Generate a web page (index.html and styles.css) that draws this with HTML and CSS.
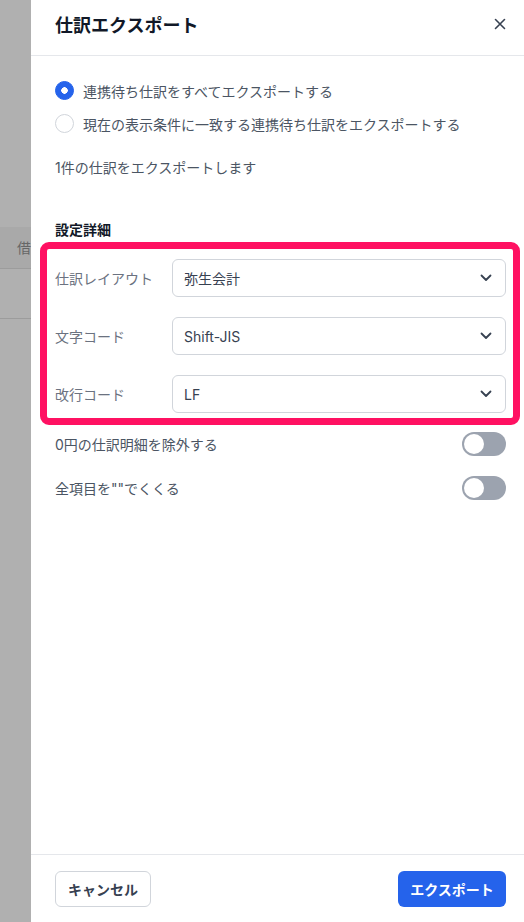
FILE: index.html
```html
<!DOCTYPE html>
<html lang="ja">
<head>
    <meta charset="UTF-8">
    <meta name="viewport" content="width=device-width, initial-scale=1.0">
    <title>仕訳エクスポート</title>
    <link rel="stylesheet" href="styles.css">
</head>
<body>
    <div class="screen">
        <div class="behind">
            <div class="behind-head">借方</div>
            <div class="behind-row"></div>
        </div>

        <div class="drawer">
            <div class="drawer-header">
                <h2>仕訳エクスポート</h2>
                <button class="close-button" aria-label="閉じる">
                    <svg width="12" height="12" viewBox="0 0 12 12">
                        <path d="M1.5 1.5 L10.5 10.5 M10.5 1.5 L1.5 10.5" stroke="#374151" stroke-width="1.6" stroke-linecap="round" fill="none"/>
                    </svg>
                </button>
            </div>

            <div class="drawer-body">
                <label class="radio-row">
                    <span class="radio checked"></span>
                    連携待ち仕訳をすべてエクスポートする
                </label>
                <label class="radio-row">
                    <span class="radio"></span>
                    現在の表示条件に一致する連携待ち仕訳をエクスポートする
                </label>

                <p class="count">1件の仕訳をエクスポートします</p>

                <h3>設定詳細</h3>

                <div class="highlight">
                    <div class="field">
                        <span class="field-label">仕訳レイアウト</span>
                        <div class="select">
                            <span>弥生会計</span>
                            <svg width="12" height="8" viewBox="0 0 12 8"><path d="M1.5 1.5 L6 6 L10.5 1.5" stroke="#374151" stroke-width="1.8" fill="none" stroke-linecap="round" stroke-linejoin="round"/></svg>
                        </div>
                    </div>
                    <div class="field">
                        <span class="field-label">文字コード</span>
                        <div class="select">
                            <span>Shift-JIS</span>
                            <svg width="12" height="8" viewBox="0 0 12 8"><path d="M1.5 1.5 L6 6 L10.5 1.5" stroke="#374151" stroke-width="1.8" fill="none" stroke-linecap="round" stroke-linejoin="round"/></svg>
                        </div>
                    </div>
                    <div class="field">
                        <span class="field-label">改行コード</span>
                        <div class="select">
                            <span>LF</span>
                            <svg width="12" height="8" viewBox="0 0 12 8"><path d="M1.5 1.5 L6 6 L10.5 1.5" stroke="#374151" stroke-width="1.8" fill="none" stroke-linecap="round" stroke-linejoin="round"/></svg>
                        </div>
                    </div>
                </div>

                <div class="toggle-row">
                    <span>0円の仕訳明細を除外する</span>
                    <span class="toggle"><span class="knob"></span></span>
                </div>
                <div class="toggle-row">
                    <span>全項目を""でくくる</span>
                    <span class="toggle"><span class="knob"></span></span>
                </div>
            </div>

            <div class="drawer-footer">
                <button class="btn btn-secondary">キャンセル</button>
                <button class="btn btn-primary">エクスポート</button>
            </div>
        </div>
    </div>
</body>
</html>
```

FILE: styles.css
```css
* {
    box-sizing: border-box;
}

body {
    margin: 0;
    font-family: 'Inter', 'Noto Sans CJK JP', sans-serif;
    background-color: #b0b0b0;
}

.screen {
    display: flex;
    height: 100vh;
    overflow: hidden;
}

/* page under the overlay */
.behind {
    width: 31px;
    flex-shrink: 0;
    padding-top: 227px;
    overflow: hidden;
}

.behind-head {
    height: 42px;
    padding: 10px 0 0 17px;
    background-color: #a9a9a9;
    border-bottom: 1px solid #9c9c9c;
    color: #666666;
    font-size: 14px;
    white-space: nowrap;
    overflow: hidden;
}

.behind-row {
    height: 50px;
    border-bottom: 1px solid #9c9c9c;
}

/* drawer */
.drawer {
    flex: 1;
    display: flex;
    flex-direction: column;
    background-color: #ffffff;
}

.drawer-header {
    height: 56px;
    display: flex;
    align-items: center;
    justify-content: space-between;
    padding: 0 17px 8px 24px;
    border-bottom: 1px solid #e5e7eb;
}

.drawer-header h2 {
    margin: 0;
    font-size: 18px;
    font-weight: 700;
    color: #111827;
}

.close-button {
    border: none;
    background: none;
    padding: 0;
    width: 14px;
    height: 14px;
    display: flex;
    align-items: center;
    justify-content: center;
    cursor: pointer;
}

.drawer-body {
    flex: 1;
    padding: 18px 18px 0 24px;
}

.radio-row {
    display: flex;
    align-items: center;
    gap: 9px;
    height: 33px;
    font-size: 14px;
    color: #4b5563;
}

.radio {
    width: 19px;
    height: 19px;
    border-radius: 50%;
    border: 1px solid #d1d5db;
    flex-shrink: 0;
    background-color: #ffffff;
}

.radio.checked {
    border-color: #2563eb;
    background-color: #2563eb;
    background-image: radial-gradient(circle, #ffffff 3px, transparent 3.5px);
}

.count {
    margin: 18px 0 0;
    font-size: 14px;
    color: #4b5563;
    line-height: 20px;
}

h3 {
    margin: 42px 0 0;
    font-size: 14px;
    font-weight: 700;
    color: #111827;
    line-height: 20px;
}

.highlight {
    margin: 2px -14px -3px -15px;
    border: 7px solid #ff1162;
    border-radius: 9px;
    padding: 10px 7px 5px 8px;
    display: flex;
    flex-direction: column;
    gap: 20px;
}

.field {
    display: flex;
    align-items: center;
}

.field-label {
    width: 117px;
    font-size: 14px;
    color: #6b7280;
}

.select {
    flex: 1;
    height: 38px;
    display: flex;
    align-items: center;
    justify-content: space-between;
    padding: 0 13px 0 11px;
    border: 1px solid #d1d5db;
    border-radius: 6px;
    font-size: 14px;
    color: #374151;
}

.toggle-row {
    display: flex;
    align-items: center;
    justify-content: space-between;
    height: 44px;
    font-size: 14px;
    color: #4b5563;
}

.toggle {
    width: 44px;
    height: 24px;
    border-radius: 12px;
    background-color: #9ca3af;
    padding: 2px;
    display: flex;
}

.knob {
    width: 20px;
    height: 20px;
    border-radius: 50%;
    background-color: #ffffff;
}

.drawer-footer {
    height: 68px;
    display: flex;
    align-items: flex-start;
    justify-content: space-between;
    padding: 16px 18px 0 24px;
    border-top: 1px solid #e5e7eb;
}

.btn {
    height: 36px;
    padding: 0;
    border-radius: 6px;
    font-family: inherit;
    font-size: 14px;
    font-weight: 700;
    white-space: nowrap;
    cursor: pointer;
}

.btn-secondary {
    width: 96px;
    background-color: #ffffff;
    border: 1px solid #d1d5db;
    color: #374151;
}

.btn-primary {
    width: 108px;
    background-color: #2563eb;
    border: none;
    color: #ffffff;
}
```
